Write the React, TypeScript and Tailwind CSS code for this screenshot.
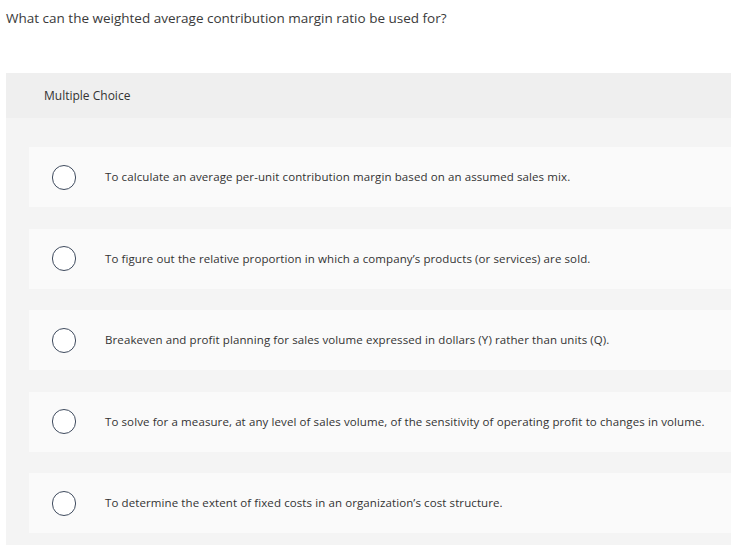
import React from 'react';

const options = [
  'To calculate an average per-unit contribution margin based on an assumed sales mix.',
  'To figure out the relative proportion in which a company’s products (or services) are sold.',
  'Breakeven and profit planning for sales volume expressed in dollars (Y) rather than units (Q).',
  'To solve for a measure, at any level of sales volume, of the sensitivity of operating profit to changes in volume.',
  'To determine the extent of fixed costs in an organization’s cost structure.',
];

export default function App() {
  return (
    <div className="w-[731px] h-[545px] overflow-hidden bg-white text-[#333]" style={{ fontFamily: '"Open Sans", sans-serif' }}>
      <p className="pl-[6px] pt-[8px] h-[73px] text-[13.5px] leading-[20px] text-[#3a3a3a]">
        What can the weighted average contribution margin ratio be used for?
      </p>

      <div className="ml-[6px] bg-[#f4f4f4]">
        <div className="h-[45px] flex items-center pl-[38px] bg-[#efefef] text-[12px] text-[#333]">
          Multiple Choice
        </div>

        <div className="pt-[29px] pb-[12px] pl-[23px] flex flex-col gap-[21.5px]">
          {options.map((opt) => (
            <div key={opt} className="h-[60px] flex items-center bg-[#fafafa]">
              <div className="ml-[23px] w-[24px] h-[25px] rounded-full border-[1.5px] border-[#3f4b5e] bg-white shrink-0" />
              <span className="ml-[29px] text-[11.5px] whitespace-nowrap tracking-[0.1px] text-[#333]">{opt}</span>
            </div>
          ))}
        </div>
      </div>
    </div>
  );
}
